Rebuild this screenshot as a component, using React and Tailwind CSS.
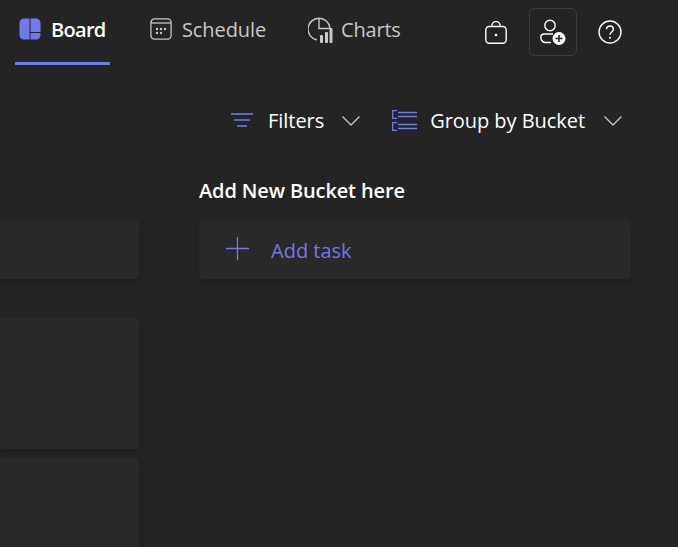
const font = { fontFamily: '"Open Sans", "Noto Sans", sans-serif' }

function BoardIcon() {
  return (
    <svg className="mb-[2px]" width="22" height="22" viewBox="0 0 22 22" fill="none">
      <path d="M5 0.500h5.500v21H5A4.500 4.500 0 0 1 0.500 17V5A4.500 4.500 0 0 1 5 0.500z" fill="#7378ea" />
      <path d="M11.500 0.500H17A4.500 4.500 0 0 1 21.500 5v9h-10z" fill="#7378ea" />
      <path d="M11.500 15h10v2a4.500 4.500 0 0 1-4.500 4.500h-5.500z" fill="#7378ea" />
    </svg>
  )
}

function ScheduleIcon() {
  return (
    <svg className="mb-[2px]" width="22" height="22" viewBox="0 0 22 22" fill="none" stroke="#c8c8c8" strokeWidth="1.300">
      <rect x="0.900" y="0.900" width="20.200" height="20.200" rx="3.500" />
      <path d="M1 5h20" />
      <g fill="#c8c8c8" stroke="none">
        <circle cx="7" cy="11" r="1.200" />
        <circle cx="11" cy="11" r="1.200" />
        <circle cx="15" cy="11" r="1.200" />
        <circle cx="7" cy="15" r="1.200" />
        <circle cx="11" cy="15" r="1.200" />
      </g>
    </svg>
  )
}

function ChartsIcon() {
  return (
    <svg width="25" height="26" viewBox="0 0 25 26" fill="none" stroke="#c8c8c8" strokeWidth="1.400">
      <path d="M9 23A11 11 0 1 1 22 11" />
      <path d="M11 1V11.500H22" />
      <g fill="#c8c8c8" stroke="none">
        <rect x="12" y="18" width="3" height="8" rx="0.800" />
        <rect x="17" y="15" width="3" height="11" rx="0.800" />
        <rect x="21.500" y="11" width="3" height="15" rx="0.800" />
      </g>
    </svg>
  )
}

function BagIcon() {
  return (
    <svg width="22" height="23" viewBox="0 0 22 23" fill="none" stroke="#fff" strokeWidth="1.400">
      <rect x="0.800" y="5.500" width="20.400" height="16.700" rx="3.500" />
      <path d="M7 5.500V4.500a4 4 0 0 1 8 0V5.500" />
      <circle cx="11" cy="14" r="1.300" fill="#fff" stroke="none" />
    </svg>
  )
}

function AddPersonIcon() {
  return (
    <svg width="26" height="26" viewBox="0 0 26 26" fill="none">
      <circle cx="10" cy="6.500" r="5.200" stroke="#fff" strokeWidth="1.400" />
      <path d="M11 23.500H6C3 23.500 0.800 21.500 0.800 18.500C0.800 16.500 2.300 15 4.300 15H13" stroke="#fff" strokeWidth="1.400" />
      <circle cx="19" cy="19.500" r="6.500" fill="#fff" />
      <path d="M19 16v7M15.500 19.500h7" stroke="#242424" strokeWidth="1.600" />
    </svg>
  )
}

function HelpIcon() {
  return (
    <svg width="24" height="24" viewBox="0 0 24 24" fill="none" stroke="#fff" strokeWidth="1.400">
      <circle cx="12" cy="12" r="11" />
      <path d="M8.600 9.300c0-2 1.500-3.300 3.400-3.300s3.400 1.300 3.400 3.200c0 2.800-3.400 2.800-3.400 5.600" />
      <circle cx="12" cy="17.800" r="1" fill="#fff" stroke="none" />
    </svg>
  )
}

function FilterIcon() {
  return (
    <svg className="mb-[2px]" width="22" height="14" viewBox="0 0 22 14" fill="none" stroke="#7378ea" strokeWidth="1.300">
      <path d="M0 1h22M3 7h16M6 13h10" />
    </svg>
  )
}

function GroupIcon() {
  return (
    <svg className="mb-[2px]" width="25" height="21" viewBox="0 0 25 21" fill="none" stroke="#7378ea" strokeWidth="1.300">
      <path d="M5 0.700H0.700V8.300H5M5 12.700H0.700V20.300H5" />
      <path d="M6 2.500h19M6 6.500h19M6 14.500h19M6 18.500h19" />
    </svg>
  )
}

function Chevron() {
  return (
    <svg width="18" height="10" viewBox="0 0 18 10" fill="none" stroke="#c8c8c8" strokeWidth="1.300">
      <path d="M0.500 0.500L9 9l8.500-8.500" />
    </svg>
  )
}

function App() {
  return (
    <div className="w-[678px] h-[547px] overflow-hidden bg-[#242424] text-white flex flex-col" style={font}>
      {/* Tabs */}
      <header className="h-[76px] shrink-0 flex border-b border-[#292929] pl-[15px] pr-[56px]">
        <div className="w-[95px] h-[65px] flex items-center gap-[10px] pl-[4px] pb-[2px] border-b-[3px] border-[#7378ea]">
          <BoardIcon />
          <span className="text-[20px] font-semibold tracking-[-0.7px]">Board</span>
        </div>
        <div className="ml-[40px] h-[60px] flex items-center gap-[10px] text-[#c8c8c8] text-[20px] tracking-[-0.1px]">
          <ScheduleIcon />
          <span>Schedule</span>
        </div>
        <div className="ml-[42px] h-[60px] flex items-center gap-[8px] text-[#c8c8c8] text-[20px] tracking-[-0.2px]">
          <ChartsIcon />
          <span>Charts</span>
        </div>
        <div className="ml-auto h-[64px] flex items-center">
          <BagIcon />
          <div className="ml-[22px] w-[48px] h-[48px] flex items-center justify-center rounded-md border border-[#3d3d3d]">
            <AddPersonIcon />
          </div>
          <div className="ml-[21px]">
            <HelpIcon />
          </div>
        </div>
      </header>

      {/* Toolbar */}
      <div className="h-[90px] shrink-0 flex items-center justify-end pr-[56px] text-[20px] tracking-[-0.05px]">
        <FilterIcon />
        <span className="ml-[15px]">Filters</span>
        <span className="ml-[18px]"><Chevron /></span>
        <span className="ml-[32px]"><GroupIcon /></span>
        <span className="ml-[13px]">Group by Bucket</span>
        <span className="ml-[19px]"><Chevron /></span>
      </div>

      {/* Board columns */}
      <div className="flex-1 flex gap-[60px] mt-[10px] min-h-0">
        <div className="w-[139px] shrink-0 pt-[43px] flex flex-col">
          <div className="h-[60px] shrink-0 rounded-r bg-[#292929] shadow-md" />
          <div className="h-[131px] shrink-0 mt-[39px] rounded-r bg-[#292929] shadow-md" />
          <div className="h-[100px] shrink-0 mt-[9px] rounded-tr bg-[#292929] shadow-md" />
        </div>
        <div className="w-[432px] shrink-0">
          <div className="h-[43px] text-[20px] font-semibold tracking-[-0.13px] leading-[30px]">Add New Bucket here</div>
          <div className="h-[60px] flex items-center rounded bg-[#292929] shadow-md pl-[27px] text-[#7378ea]">
            <span className="pb-[2px]">
              <svg width="23" height="23" viewBox="0 0 23 23" fill="none" stroke="#7378ea" strokeWidth="1.300">
                <path d="M11.500 0v23M0 11.500h23" />
              </svg>
            </span>
            <span className="ml-[22px] pt-[3px] text-[20px]">Add task</span>
          </div>
        </div>
      </div>
    </div>
  )
}

export default App
